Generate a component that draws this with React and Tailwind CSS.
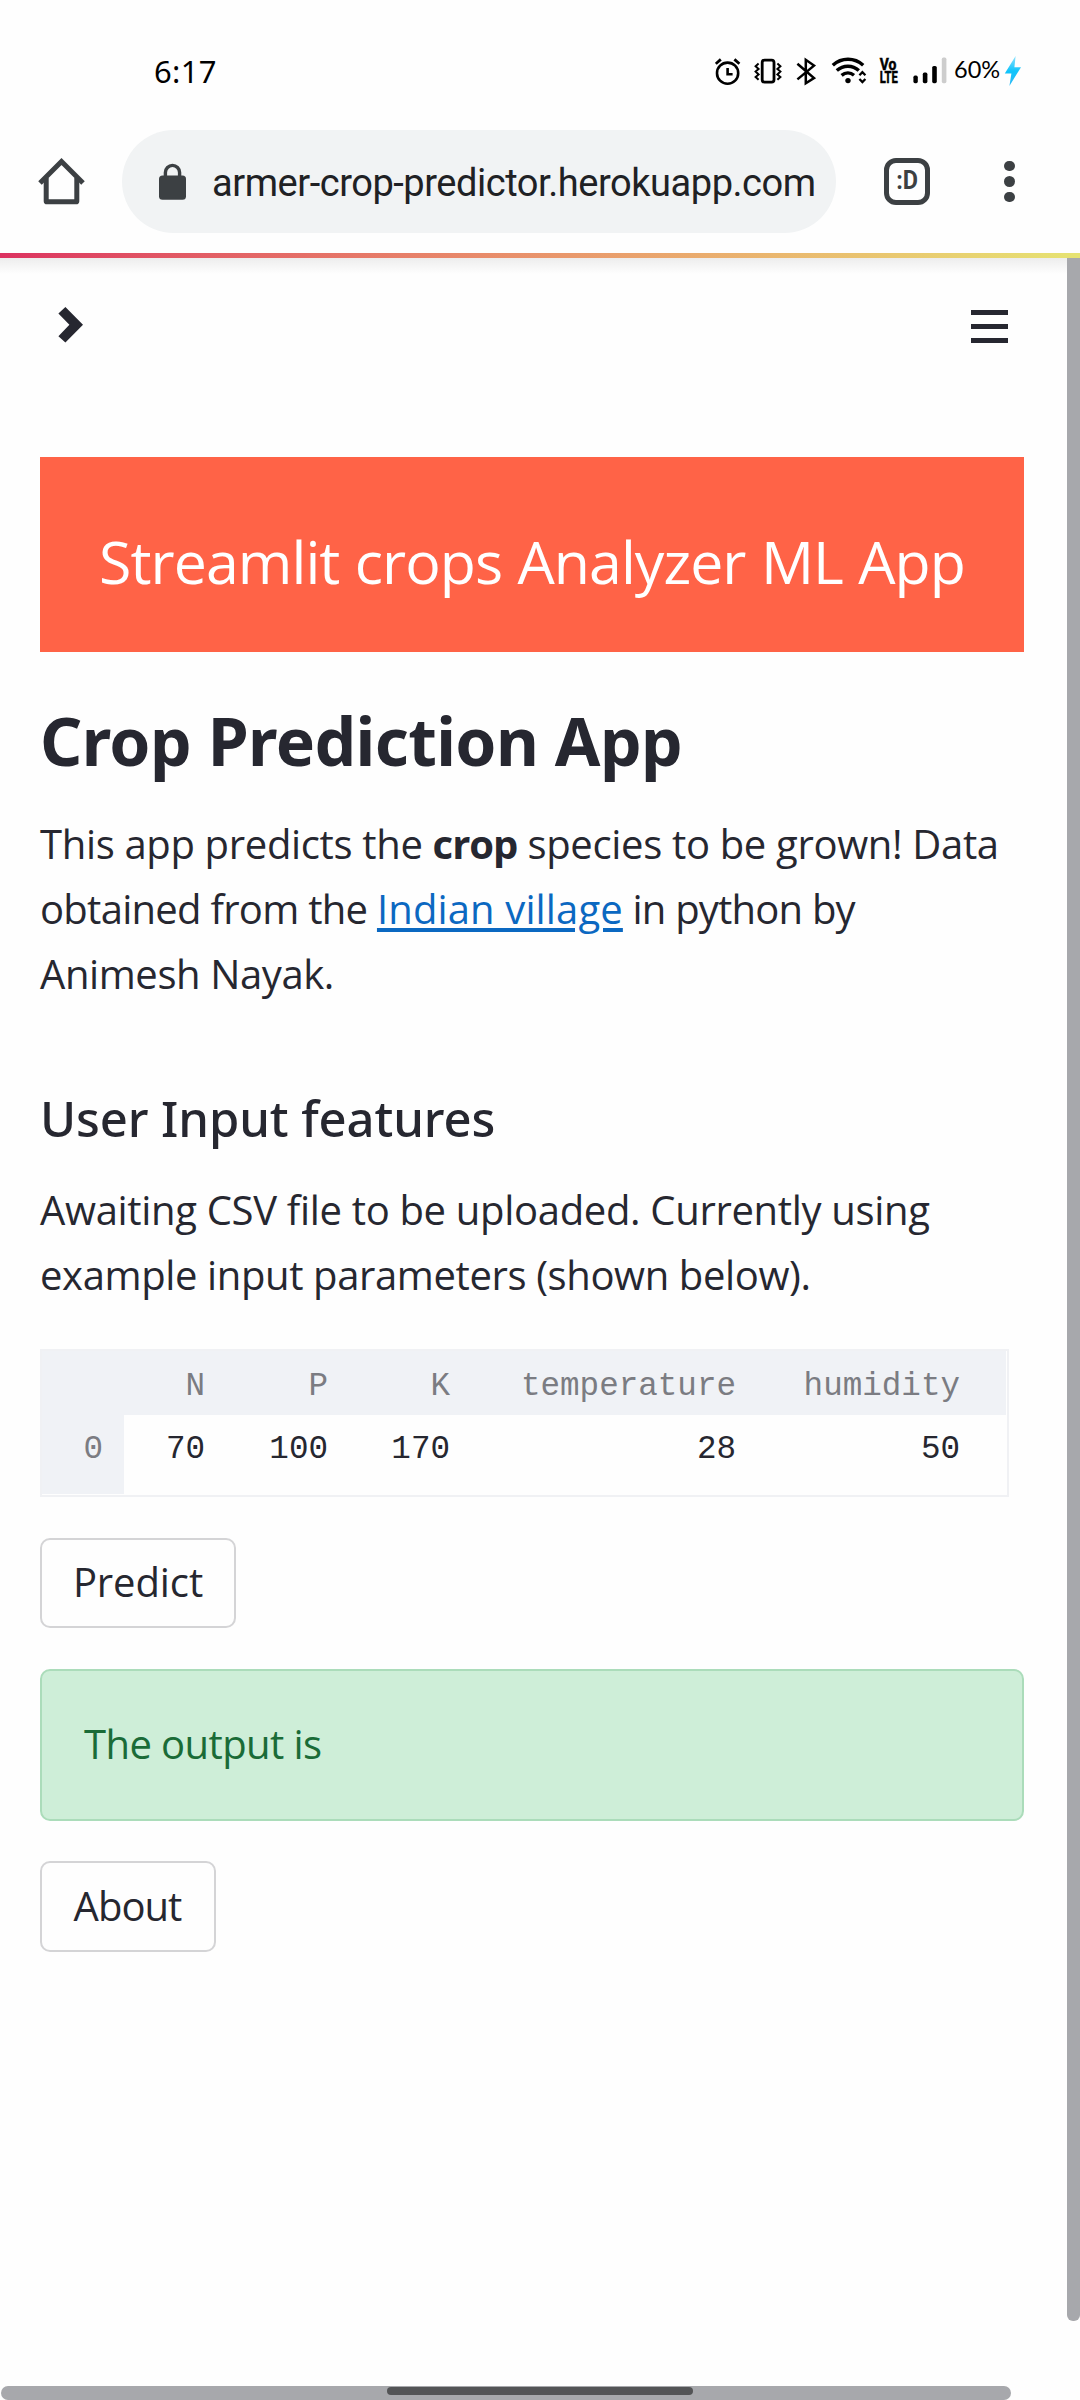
const SANS = "font-['Open_Sans',sans-serif]";
const HEADING = "font-['Noto_Sans',sans-serif]";

function StatusBar() {
  return (
    <div className="flex h-[130px] items-center pt-3 pl-[154px] text-black">
      <span className="w-[561px] font-['Noto_Sans',sans-serif] text-[31px] leading-none tracking-[0.3px]">6:17</span>
      <svg className="h-[30px] w-[26px]" viewBox="715 57 26 30" fill="none" stroke="currentColor" strokeWidth="2.6">
        <circle cx="727.6" cy="74.2" r="10.6" />
        <path d="M715.8 64.8L720.8 60.4M739.4 64.8L734.4 60.4" strokeWidth="2.8" />
        <path d="M727.6 69V75.2H732.6" />
      </svg>
      <svg className="ml-[13px] h-[30px] w-[28px]" viewBox="754 57 28 30" fill="none" stroke="currentColor">
        <rect x="762.2" y="61.2" width="11.8" height="22" rx="2.4" strokeWidth="2.8" />
        <path d="M758.6 64.5L755.6 67.2L758.6 70L755.6 72.6L758.6 75.4L755.6 78L758.6 80.8M777.4 64.5L780.4 67.2L777.4 70L780.4 72.6L777.4 75.4L780.4 78L777.4 80.8" strokeWidth="2" />
      </svg>
      <svg className="ml-[14px] h-[30px] w-[22px]" viewBox="796 57 22 30" fill="none" stroke="currentColor" strokeWidth="2.5">
        <path d="M797.4 64.8L814 79L805.8 84.2V60.8L814 66.6L797.4 80.4" />
      </svg>
      <svg className="ml-[13px] h-[30px] w-[36px]" viewBox="831 57 36 30" fill="none" stroke="currentColor" strokeWidth="3.4">
        <path d="M832.8 66.2C841.5 58.2 854.5 58.2 863.2 66.2" />
        <path d="M836.8 71.6C843.2 65.8 852.6 65.8 858.8 71.6" />
        <path d="M841.6 76.4C845.4 73.2 850.4 73.2 854 76.2" />
        <circle cx="848" cy="81.6" r="2.7" fill="currentColor" stroke="none" />
        <path d="M859.4 76.2L862.4 73.2L865.4 76.2M859.4 80L862.4 83L865.4 80" strokeWidth="2.3" />
      </svg>
      <svg className="ml-[12px] h-[40px] w-[22px]" viewBox="879 52 22 40" fill="currentColor" fontFamily="Roboto, sans-serif" fontWeight="700">
        <text transform="translate(879.8 70.6) scale(0.87 1)" fontSize="16" stroke="currentColor" strokeWidth="0.5">Vo</text>
        <text transform="translate(879.8 84.2) scale(0.7 1)" fontSize="16" stroke="currentColor" strokeWidth="0.5">LTE</text>
      </svg>
      <svg className="ml-[12px] h-[30px] w-[34px]" viewBox="913 57 34 30" fill="currentColor">
        <rect x="913.4" y="76.6" width="4.4" height="7.6" rx="1.6" />
        <rect x="922.8" y="73.6" width="4.6" height="10.6" rx="1.6" />
        <rect x="932.2" y="67" width="4.6" height="17.2" rx="1.6" />
        <rect x="941.8" y="58.6" width="4.6" height="25.6" rx="1.6" fill="#cdcdcd" />
      </svg>
      <span className="-mt-[3px] ml-[7px] w-[50px] font-['Lato',sans-serif] text-[23.5px] leading-none">60%</span>
      <svg className="h-[30px] w-[17px]" viewBox="1004 57 17 30">
        <defs>
          <linearGradient id="bolt" x1="0" y1="0" x2="0" y2="1">
            <stop offset="0" stopColor="#8fe3ff" />
            <stop offset="0.5" stopColor="#10c4fb" />
            <stop offset="1" stopColor="#2fb9f5" />
          </linearGradient>
        </defs>
        <path d="M1015.6 57L1004.8 74.6H1011.4L1009.4 87L1021 68.2H1014.4Z" fill="url(#bolt)" />
      </svg>
    </div>
  );
}

function Toolbar() {
  return (
    <div className="flex h-[103px] items-center pl-[37px] text-[#3c4043]">
      <svg className="h-[50px] w-[49px]" viewBox="37 157 49 50" fill="none" stroke="currentColor" strokeWidth="5">
        <path d="M46.2 178V201.2Q46.2 201.8 47 201.8H76Q76.8 201.8 76.8 201.2V178" />
        <path d="M40 183L61.5 161.6L83 183" />
      </svg>
      <div className="ml-9 flex h-[103px] w-[714px] items-center rounded-full bg-[#f1f3f4] pl-[37px]">
        <svg className="h-[38px] w-[28px]" viewBox="159 162 28 38">
          <rect x="159" y="174.6" width="27" height="24.2" rx="3.5" fill="currentColor" />
          <path d="M165.4 176V171.5A7.1 7.1 0 0 1 179.6 171.5V176" fill="none" stroke="currentColor" strokeWidth="3.4" />
        </svg>
        <span className="ml-[25px] pt-[3px] font-['Roboto',sans-serif] text-[38px] tracking-[-0.45px] whitespace-nowrap text-[#202124]">
          armer-crop-predictor.herokuapp.com
        </span>
      </div>
      <div className="ml-[48px] flex h-[47px] w-[46px] items-center justify-center rounded-[12px] border-[5px] border-[#3c4043]">
        <span className="-mt-[3px] scale-x-90 font-['Roboto',sans-serif] text-[26px] leading-none font-bold">:D</span>
      </div>
      <div className="ml-[74px] flex flex-col gap-[5px]">
        <div className="size-[10.5px] rounded-full bg-[#3c4043]" />
        <div className="size-[10.5px] rounded-full bg-[#3c4043]" />
        <div className="size-[10.5px] rounded-full bg-[#3c4043]" />
      </div>
    </div>
  );
}

function AppHeader() {
  return (
    <div className="flex h-[199px] items-start justify-between bg-linear-to-b from-[#ededed] to-[#fefefe] to-[16px] pr-[72px] pl-[58px]">
      <svg className="mt-[48px] h-[38px] w-[26px]" viewBox="0 0 26 38" fill="#262730">
        <path d="M7.4 1L0.4 7.6L11.4 18.8L0.4 30.2L7.4 36.6L25 18.8Z" />
      </svg>
      <div className="mt-[52px] flex flex-col gap-[9px]">
        <div className="h-[5px] w-[37px] bg-[#262730]" />
        <div className="h-[5px] w-[37px] bg-[#262730]" />
        <div className="h-[5px] w-[37px] bg-[#262730]" />
      </div>
    </div>
  );
}

const COLUMNS = [
  ["N", "70"],
  ["P", "100"],
  ["K", "170"],
  ["temperature", "28"],
];

function DataTable() {
  return (
    <div className="mt-[42px] h-[148px] w-[969px] border-2 border-[#f0f1f4] text-right font-['Liberation_Mono',monospace] text-[32.6px] tracking-normal">
      <div className="grid h-[64px] w-[964px] grid-cols-[82px_102px_123px_122px_286px_249px] bg-[#f0f2f6] leading-[71px] text-[#7b7c82]">
        <span />
        {COLUMNS.map(([name]) => (
          <span key={name} className="pr-[21px]">{name}</span>
        ))}
        <span className="pr-[46px]">humidity</span>
      </div>
      <div className="grid h-[79px] w-[964px] grid-cols-[82px_102px_123px_122px_286px_249px] leading-[70px] text-[#262730]">
        <span className="bg-[#f0f2f6] pr-[21px] text-[#7b7c82]">0</span>
        {COLUMNS.map(([name, value]) => (
          <span key={name} className="pr-[21px]">{value}</span>
        ))}
        <span className="pr-[46px]">50</span>
      </div>
    </div>
  );
}

export default function App() {
  return (
    <div className="relative h-[2400px] w-[1080px] overflow-hidden bg-[#fefefe]">
      <header className="h-[253px] bg-[#fefefe]">
        <StatusBar />
        <Toolbar />
      </header>
      <div className="h-[5px] bg-linear-to-r from-[#dc3160] to-[#e6e372]" />
      <AppHeader />
      <main className={`ml-10 w-[984px] ${SANS} text-[40px] leading-[65px] tracking-[-0.34px] text-[#262730]`}>
        <div className="h-[195px] bg-[#ff6347] pt-[64px] text-center text-[59px] leading-[80px] tracking-[-0.95px] [word-spacing:1px] whitespace-nowrap text-white">
          Streamlit crops Analyzer ML App
        </div>
        <h1 className={`mt-[46px] ${HEADING} text-[66px] leading-[84px] font-bold tracking-[-0.6px]`}>Crop Prediction App</h1>
        <p className="mt-[29px] whitespace-nowrap">
          This app predicts the <b className="tracking-[-1px]">crop</b>{" "}
          <span className="tracking-[-0.33px]">species to be grown! Data</span>
          <br />
          <span className="tracking-[-0.72px]">obtained from the </span>
          <a className="tracking-[0.13px] text-[#0b68c1] underline decoration-4 underline-offset-[4px]">Indian village</a>
          <span className="tracking-[-0.79px]"> in python by</span>
          <br />
          <span className="tracking-[-0.4px]">Animesh Nayak.</span>
        </p>
        <h2 className={`mt-[82px] ${HEADING} text-[49px] leading-[60px] font-medium tracking-[-0.1px]`}>User Input features</h2>
        <p className="mt-[29px] whitespace-nowrap">
          <span className="tracking-[-0.32px]">Awaiting CSV file to be uploaded. Currently using</span>
          <br />
          <span className="tracking-[-0.38px]">example input parameters (shown below).</span>
        </p>
        <DataTable />
        <button className="mt-[41px] block h-[90px] w-[196px] rounded-[10px] border-2 border-[#d4d4d6] pb-[3px] leading-[83px] tracking-[-0.1px]">
          Predict
        </button>
        <div className="mt-[41px] h-[152px] rounded-[10px] border-2 border-[#abdcba] bg-[#ceeed8] pl-[42px] leading-[145px] tracking-[-0.58px] text-[#1a6b37]">
          The output is
        </div>
        <button className="mt-10 block h-[91px] w-[176px] rounded-[10px] border-2 border-[#d4d4d6] pr-[1px] pb-[2px] leading-[85px] tracking-[-0.95px]">
          About
        </button>
      </main>
      <div className="absolute top-[258px] right-0 h-[2063px] w-[13px] rounded-b-[6px] bg-[#a7a8ac]" />
      <div className="absolute bottom-0 left-px h-[14px] w-[1010px] rounded-[7px] bg-[#a7a8ac]" />
      <div className="absolute bottom-[5px] left-[387px] h-[8px] w-[306px] rounded-[4px] bg-[#535456]" />
    </div>
  );
}
